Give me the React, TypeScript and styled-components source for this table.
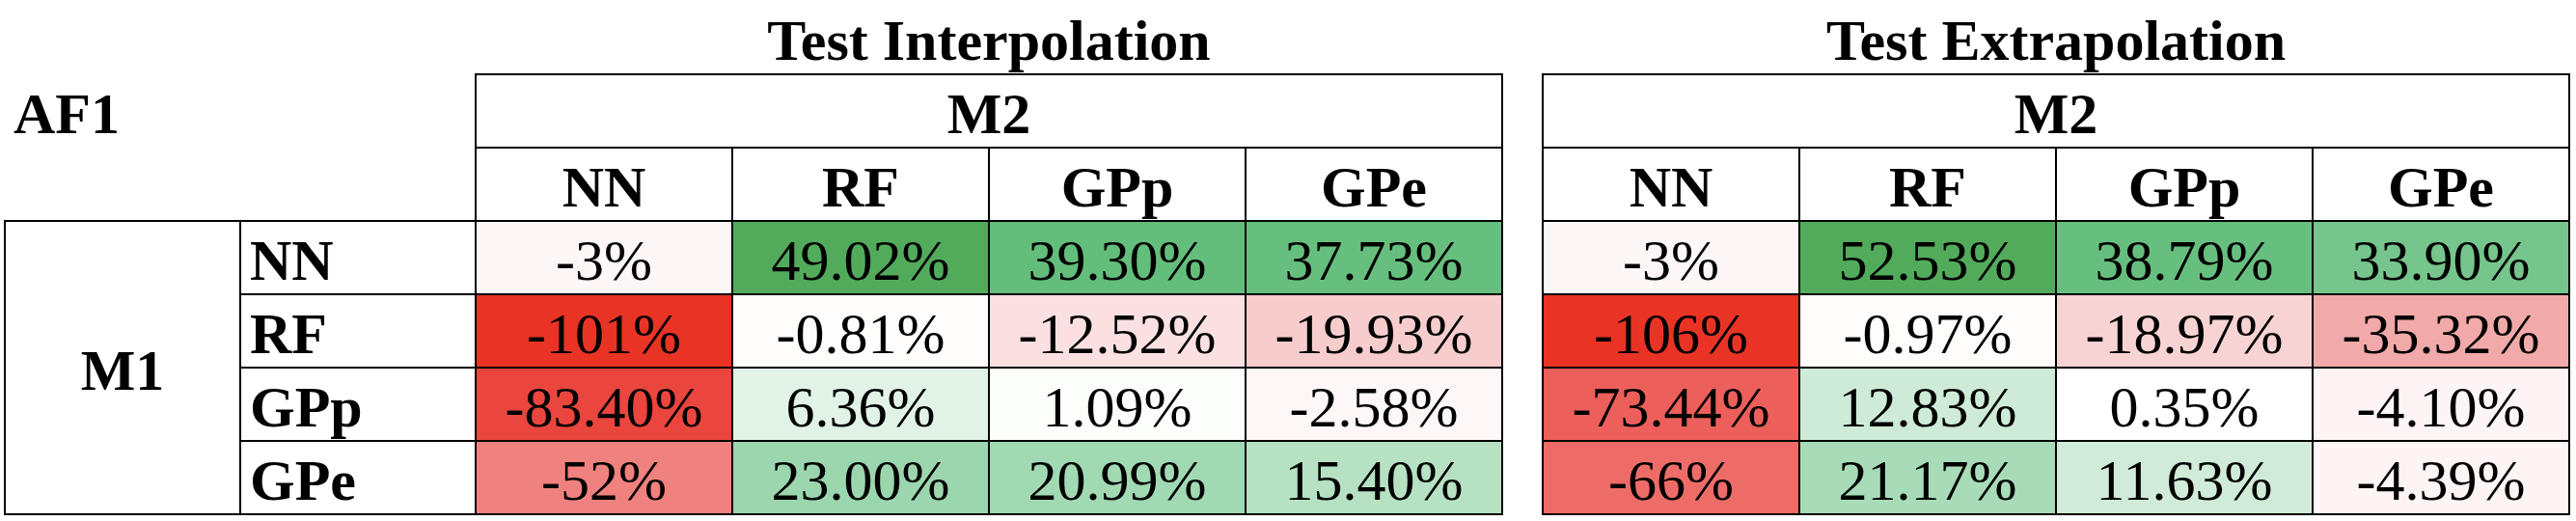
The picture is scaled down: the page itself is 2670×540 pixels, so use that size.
import React from "react";
import styled, { createGlobalStyle } from "styled-components";

const GlobalStyle = createGlobalStyle`
  body {
    margin: 0;
    background: #ffffff;
    font-family: "Liberation Serif", "Times New Roman", serif;
    color: #000000;
  }
`;

const Page = styled.div`
  display: flex;
  align-items: flex-start;
  width: 2670px;
  height: 540px;
  background: #ffffff;
`;

const LabelBlock = styled.div`
  display: flex;
  flex-direction: column;
  width: 492px;
  flex-shrink: 0;
`;

const TitleSpacer = styled.div`
  height: 76px;
`;

const CornerHeader = styled.div`
  display: flex;
  align-items: center;
  height: 78px;
  margin-bottom: 74px;
  padding: 5px 0 0 14px;
  box-sizing: border-box;
  font-size: 60px;
  font-weight: bold;
  line-height: 1;
`;

const LabelGrid = styled.div`
  margin-left: 4px;
  display: grid;
  grid-template-columns: 242px 242px;
  grid-template-rows: repeat(4, 74px);
  gap: 2px;
  background: #000000;
  border: 2px solid #000000;
  border-right: none;
`;

const GroupLabel = styled.div`
  grid-column: 1;
  grid-row: 1 / span 4;
  background: #ffffff;
  display: flex;
  align-items: center;
  justify-content: center;
  padding-top: 5px;
  box-sizing: border-box;
  font-size: 60px;
  font-weight: bold;
  line-height: 1;
`;

const RowLabel = styled.div`
  grid-column: 2;
  background: #ffffff;
  display: flex;
  align-items: center;
  padding: 5px 0 0 9px;
  box-sizing: border-box;
  font-size: 60px;
  font-weight: bold;
  line-height: 1;
`;

const TableBlock = styled.div<{ $gap?: number }>`
  display: flex;
  flex-direction: column;
  width: 1066px;
  flex-shrink: 0;
  margin-left: ${(p) => p.$gap ?? 0}px;
`;

const Title = styled.div`
  height: 76px;
  display: flex;
  align-items: flex-end;
  justify-content: center;
  padding-bottom: 4px;
  box-sizing: border-box;
  font-size: 60px;
  font-weight: bold;
  line-height: 1;
`;

const Grid = styled.div`
  display: grid;
  grid-template-columns: repeat(4, 264px);
  grid-template-rows: repeat(6, 74px);
  gap: 2px;
  background: #000000;
  border: 2px solid #000000;
`;

const Cell = styled.div<{ $bg?: string; $bold?: boolean; $span?: number }>`
  grid-column: span ${(p) => p.$span ?? 1};
  background: ${(p) => p.$bg ?? "#ffffff"};
  display: flex;
  align-items: center;
  justify-content: center;
  padding-top: 5px;
  box-sizing: border-box;
  font-size: 60px;
  font-weight: ${(p) => (p.$bold ? "bold" : "normal")};
  line-height: 1;
`;

type Entry = [string, string];

const models = ["NN", "RF", "GPp", "GPe"];

const interpolation: Entry[][] = [
  [["-3%", "#fcf6f6"], ["49.02%", "#52ab5b"], ["39.30%", "#63bd7b"], ["37.73%", "#66bf7e"]],
  [["-101%", "#e93325"], ["-0.81%", "#fffdfc"], ["-12.52%", "#fbe0e1"], ["-19.93%", "#f6cccd"]],
  [["-83.40%", "#ea463d"], ["6.36%", "#e1f2e7"], ["1.09%", "#fcfefc"], ["-2.58%", "#fdf7f7"]],
  [["-52%", "#ef817f"], ["23.00%", "#9bd6ae"], ["20.99%", "#a1d9b3"], ["15.40%", "#b6e2c3"]],
];

const extrapolation: Entry[][] = [
  [["-3%", "#fcf6f6"], ["52.53%", "#52ab5b"], ["38.79%", "#67bf7f"], ["33.90%", "#75c58c"]],
  [["-106%", "#e93325"], ["-0.97%", "#fffdfc"], ["-18.97%", "#f8d3d3"], ["-35.32%", "#f1aaa9"]],
  [["-73.44%", "#ec5f5a"], ["12.83%", "#cdebd6"], ["0.35%", "#ffffff"], ["-4.10%", "#fdf5f5"]],
  [["-66%", "#ee6c68"], ["21.17%", "#a8dcb8"], ["11.63%", "#d0ecd8"], ["-4.39%", "#fdf4f4"]],
];

function ResultTable({ title, rows, gap }: { title: string; rows: Entry[][]; gap?: number }) {
  return (
    <TableBlock $gap={gap}>
      <Title>{title}</Title>
      <Grid>
        <Cell $span={4} $bold>
          M2
        </Cell>
        {models.map((m) => (
          <Cell key={m} $bold>
            {m}
          </Cell>
        ))}
        {rows.flat().map(([value, bg], i) => (
          <Cell key={i} $bg={bg}>
            {value}
          </Cell>
        ))}
      </Grid>
    </TableBlock>
  );
}

export default function App() {
  return (
    <>
      <GlobalStyle />
      <Page>
        <LabelBlock>
          <TitleSpacer />
          <CornerHeader>AF1</CornerHeader>
          <LabelGrid>
            <GroupLabel>M1</GroupLabel>
            {models.map((m) => (
              <RowLabel key={m}>{m}</RowLabel>
            ))}
          </LabelGrid>
        </LabelBlock>
        <ResultTable title="Test Interpolation" rows={interpolation} />
        <ResultTable title="Test Extrapolation" rows={extrapolation} gap={40} />
      </Page>
    </>
  );
}
